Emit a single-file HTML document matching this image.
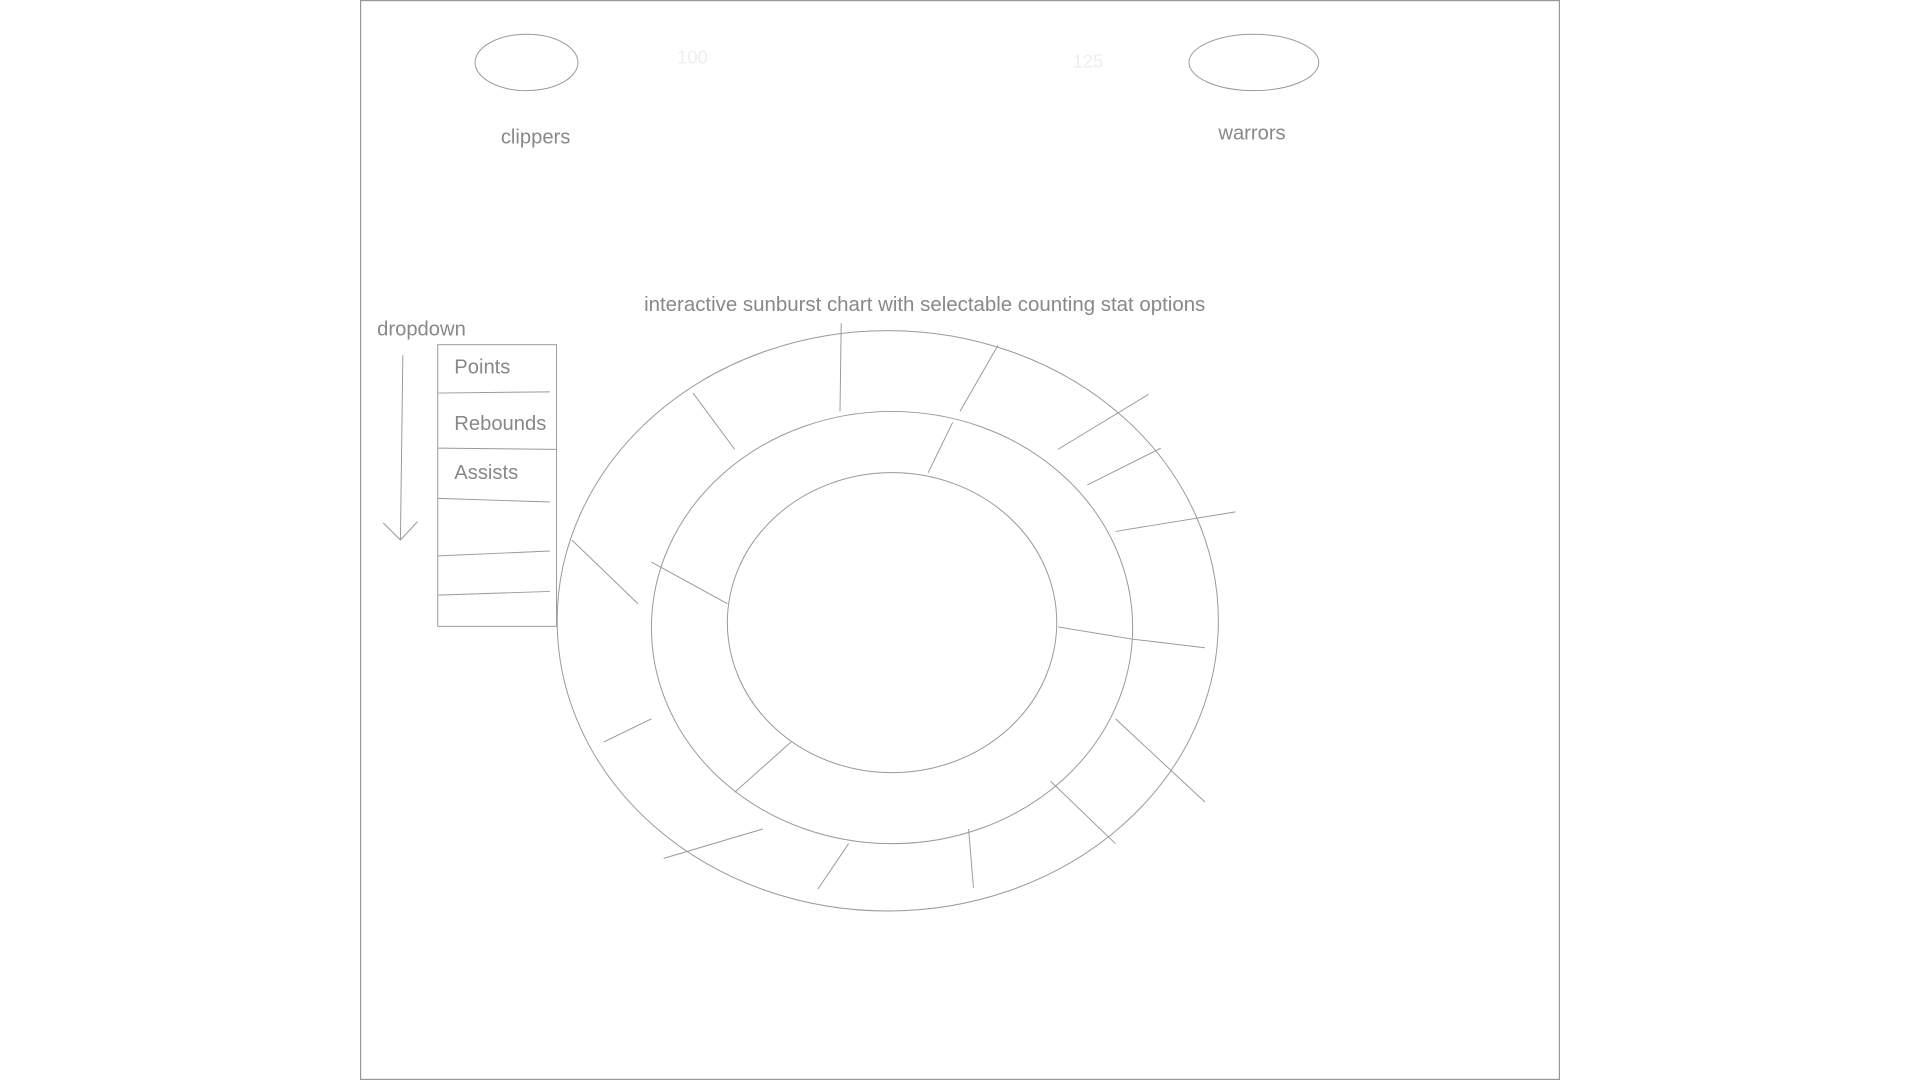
<!DOCTYPE html>
<html><head><style>html,body{margin:0;padding:0;background:#fff;width:1920px;height:1080px;overflow:hidden}svg{display:block}</style></head>
<body>
<svg width="1920" height="1080" viewBox="0 0 1568 882" xmlns="http://www.w3.org/2000/svg" font-family="Liberation Sans, sans-serif">
<rect x="294.5" y="0.5" width="979" height="881" fill="#fff" stroke="#999" stroke-width="1"/>
<g fill="none" stroke="#999" stroke-width="0.8">
<ellipse cx="430" cy="51" rx="42" ry="23"/>
<ellipse cx="1024" cy="51" rx="53" ry="23"/>
<ellipse cx="725" cy="507" rx="270" ry="237"/>
<ellipse cx="728.5" cy="512.5" rx="196.5" ry="176.5"/>
<ellipse cx="728.5" cy="508.5" rx="134.5" ry="122.5"/>
<path d="M687 264L686 336M815 282L784 336M566 321L600 367M938 322L864 367M948 366L888 396M1009 418L911 434M778 345L758 386M467 441L521 493M532 459L594 493M864 512L925 522L984 529M532 587L493 606M646 606L600 647M911 587L984 655M858 638L911 689M623 677L542 701M693 689L668 726M791 677L795 725"/>
<rect x="357.5" y="281.5" width="97" height="230"/>
<path d="M358 321L449 320M358 366L454 367M358 407L449 410M358 454L449 450M358 486L449 483"/>
<path d="M329 290L327 441M313 427L327 441L341 426"/>
</g>
<g fill="#888" font-size="16.5">
<text x="308" y="274">dropdown</text>
<text x="371" y="305">Points</text>
<text x="371" y="351">Rebounds</text>
<text x="371" y="391">Assists</text>
<text x="526" y="254" font-size="16.7">interactive sunburst chart with selectable counting stat options</text>
<text x="409" y="117">clippers</text>
<text x="995" y="114">warrors</text>
</g>
<g fill="#eee" font-size="15">
<text x="553" y="52">100</text>
<text x="876" y="55">125</text>
</g>
</svg>
</body></html>
